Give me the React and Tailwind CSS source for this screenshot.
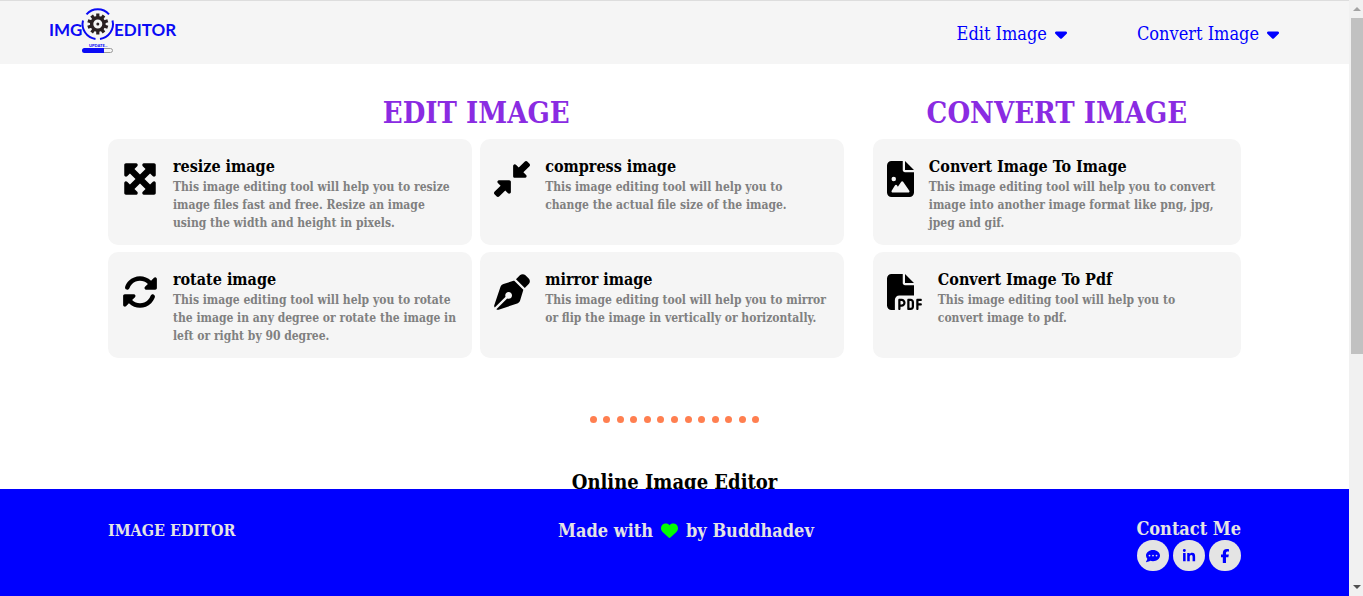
import React from "react";
import {
  FaCaretDown,
  FaMaximize,
  FaDownLeftAndUpRightToCenter,
  FaRotate,
  FaPenNib,
  FaFileImage,
  FaFilePdf,
  FaHeart,
  FaCommentDots,
  FaLinkedinIn,
  FaFacebookF,
} from "react-icons/fa6";

const editTools = [
  {
    title: "resize image",
    text: "This image editing tool will help you to resize image files fast and free. Resize an image using the width and height in pixels.",
    Icon: FaMaximize,
  },
  {
    title: "compress image",
    text: "This image editing tool will help you to change the actual file size of the image.",
    Icon: FaDownLeftAndUpRightToCenter,
  },
  {
    title: "rotate image",
    text: "This image editing tool will help you to rotate the image in any degree or rotate the image in left or right by 90 degree.",
    Icon: FaRotate,
  },
  {
    title: "mirror image",
    text: "This image editing tool will help you to mirror or flip the image in vertically or horizontally.",
    Icon: FaPenNib,
  },
];

const convertTools = [
  {
    title: "Convert Image To Image",
    text: "This image editing tool will help you to convert image into another image format like png, jpg, jpeg and gif.",
    Icon: FaFileImage,
    narrow: true,
  },
  {
    title: "Convert Image To Pdf",
    text: "This image editing tool will help you to convert image to pdf.",
    Icon: FaFilePdf,
  },
];

const socials = [
  { label: "Message", Icon: FaCommentDots },
  { label: "LinkedIn", Icon: FaLinkedinIn },
  { label: "Facebook", Icon: FaFacebookF },
];

const teeth = [0, 36, 72, 108, 144, 180, 216, 252, 288, 324];

function Logo() {
  return (
    <svg viewBox="0 0 128 48" className="h-12 w-32" role="img" aria-label="IMG EDITOR">
      <g fill="#0a0af5" fontFamily="Lato, sans-serif" fontWeight="700" fontSize="17">
        <text x="0" y="29">IMG</text>
        <text x="65" y="29">EDITOR</text>
      </g>
      <g fill="none" stroke="#0a0af5" strokeWidth="2">
        <path d="M37.5 7.3A15 15 0 0 1 60 7.3" />
        <path d="M34 13.5A15 15 0 0 0 46.5 32" />
        <path d="M63.5 13.5A15 15 0 0 1 51 32" />
      </g>
      <g fill="#2a2022">
        {teeth.map((a) => (
          <rect key={a} x="47.2" y="6.5" width="3.2" height="5" transform={`rotate(${a} 48.8 17)`} />
        ))}
      </g>
      <circle cx="48.8" cy="17" r="6.2" fill="none" stroke="#2a2022" strokeWidth="3.4" />
      <circle cx="48.8" cy="17" r="1.5" fill="#2a2022" />
      <text x="40" y="39.5" fill="#0a0af5" fontFamily="Lato, sans-serif" fontWeight="900" fontSize="4">
        UPDATE...
      </text>
      <rect x="34" y="41.5" width="29.5" height="4" rx="2" fill="#f4f4f4" stroke="#999" strokeWidth="1" />
      <path d="M35.5 41H55v5H35.5a2.5 2.5 0 0 1 0-5z" fill="#0a0af5" />
    </svg>
  );
}

function ToolCard({ title, text, Icon, narrow }) {
  return (
    <a href="#" className="flex min-h-[106px] gap-[15px] rounded-[10px] bg-[#f5f5f5] px-[14px] pt-4 pb-3">
      <Icon className={`mt-[6px] h-9 shrink-0 text-black ${narrow ? "w-[27px]" : "w-9"}`} />
      <div className={narrow ? "" : "max-w-[284px]"}>
        <h3 className="text-[16px] leading-[23px] font-bold text-black">{title}</h3>
        <p className="text-[12px] leading-[18px] font-bold text-[#808080]">{text}</p>
      </div>
    </a>
  );
}

function Scrollbar() {
  return (
    <div aria-hidden="true" className="flex w-[14px] shrink-0 flex-col items-end bg-[#f1f1f1]">
      <div className="flex h-[18px] w-3 items-center justify-center">
        <svg viewBox="0 0 8 4" className="h-1 w-2" fill="#a3a3a3"><path d="M4 0l4 4H0z" /></svg>
      </div>
      <div className="flex w-3 flex-1 flex-col">
        <div className="h-[60%] w-full bg-[#c1c1c1]" />
      </div>
      <div className="flex h-[18px] w-3 items-center justify-center">
        <svg viewBox="0 0 8 4" className="h-1 w-2" fill="#505050"><path d="M0 0h8L4 4z" /></svg>
      </div>
    </div>
  );
}

export default function App() {
  return (
    <div className="flex h-screen bg-white font-['DejaVu_Serif_Condensed','DejaVu_Serif',serif]">
      <div className="flex min-w-0 flex-1 flex-col">
        <header className="flex h-16 shrink-0 items-center justify-between border-t border-[#dddddd] bg-[#f5f5f5] pr-[70px] pl-[49px]">
          <a href="#" className="pb-1"><Logo /></a>
          <nav className="flex gap-[70px] pt-[2px] text-[18px] text-[#0000ff]">
            {["Edit Image", "Convert Image"].map((label) => (
              <button key={label} type="button" className="flex items-center gap-2">
                {label}
                <FaCaretDown className="h-5 w-3" />
              </button>
            ))}
          </nav>
        </header>

        <main className="min-h-0 flex-1 overflow-hidden pt-6">
          <div className="mx-auto flex w-[84%] items-start justify-between">
            <section className="w-[65%]">
              <h2 className="text-center text-[29px] leading-[51px] font-bold text-[#8a2be2]">EDIT IMAGE</h2>
              <div className="grid grid-cols-2 gap-x-2 gap-y-[7px]">
                {editTools.map((tool) => <ToolCard key={tool.title} {...tool} />)}
              </div>
            </section>
            <section className="w-[32.5%]">
              <h2 className="text-center text-[29px] leading-[51px] font-bold text-[#8a2be2]">CONVERT IMAGE</h2>
              <div className="grid gap-y-[7px]">
                {convertTools.map((tool) => <ToolCard key={tool.title} {...tool} />)}
              </div>
            </section>
          </div>
          <div className="mx-auto mt-[58px] flex w-[170px] justify-between">
            {Array.from({ length: 13 }, (_, i) => (
              <span key={i} className="size-[7px] rounded-full bg-[#ff7f50]" />
            ))}
          </div>
          <h2 className="mt-11 text-center text-[20px] leading-[30px] font-bold text-black">Online Image Editor</h2>
        </main>

        <footer className="h-[107px] shrink-0 bg-[#0000ff] text-[18px] leading-[23px] font-bold text-[#e4e4e4]">
          <div className="mx-auto flex w-[84%] items-start justify-between pt-7">
            <p className="pt-[2px] text-[16px]">IMAGE EDITOR</p>
            <p className="flex items-center gap-2 pt-[2px]">
              Made with <FaHeart className="size-[17px] text-[#00ff00]" /> by Buddhadev
            </p>
            <div className="flex flex-col items-end">
              <p>Contact Me</p>
              <div className="flex gap-1">
                {socials.map(({ label, Icon }) => (
                  <a key={label} href="#" aria-label={label} className="flex h-[31px] w-8 items-center justify-center rounded-full bg-[#e4e4e4] text-[#0000ff]">
                    <Icon className="size-[14px]" />
                  </a>
                ))}
              </div>
            </div>
          </div>
        </footer>
      </div>
      <Scrollbar />
    </div>
  );
}
